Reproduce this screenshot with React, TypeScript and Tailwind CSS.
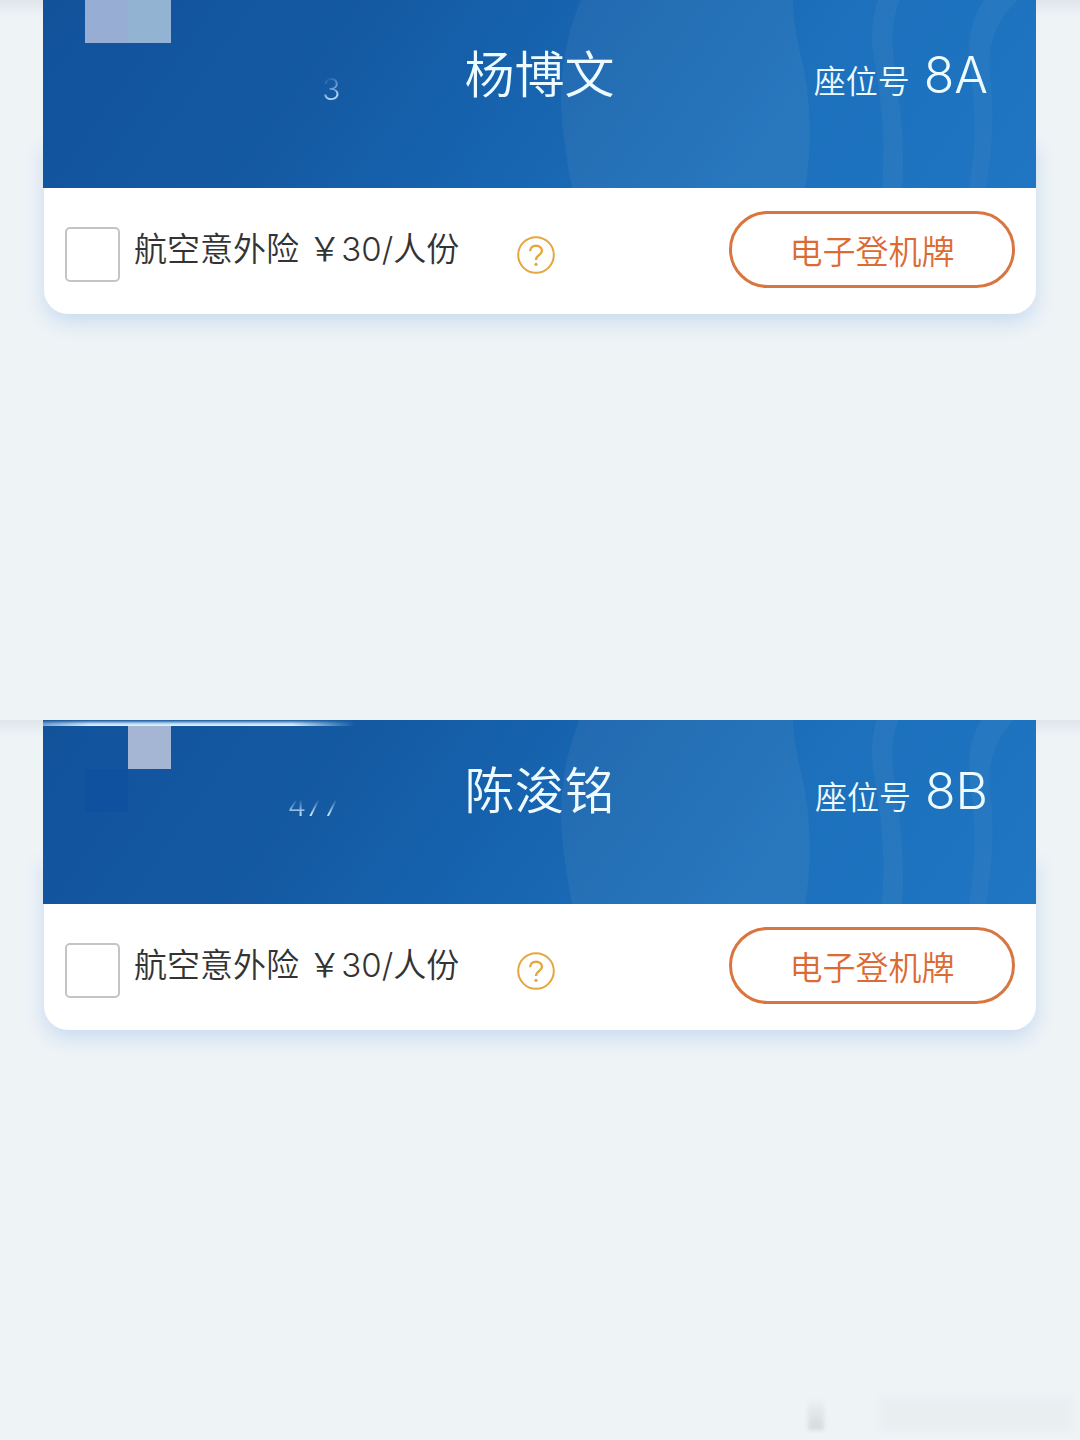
import { useId, useState } from "react";

interface Passenger {
  id: number;
  name: string;
  seat: string;
  idTail: string;
}

const PASSENGERS: Passenger[] = [
  { id: 0, name: "杨博文", seat: "8A", idTail: "3" },
  { id: 1, name: "陈浚铭", seat: "8B", idTail: "477" },
];

function HeaderPattern() {
  return (
    <svg
      className="absolute inset-0 h-full w-full"
      viewBox="0 0 993 188"
      preserveAspectRatio="none"
      aria-hidden="true"
    >
      <g fill="#8fb0c8">
        <path
          opacity="0.1"
          d="M538 0C519 45 515 90 520 130C523 155 526 175 529 188H762C769 150 768 105 761 70C754 40 750 20 750 0Z"
        />
        <path
          opacity="0.09"
          d="M835 0C828 20 827 42 832 65C840 105 842 150 839 188H859C862 150 858 110 853 75C847 40 849 20 857 0Z"
        />
        <path
          opacity="0.08"
          d="M941 0C926 22 924 45 928 75C934 115 932 155 926 188H943C949 150 952 115 947 75C944 42 955 18 975 0Z"
        />
      </g>
    </svg>
  );
}

function MaskedId({ passenger }: { passenger: Passenger }) {
  const long = passenger.idTail.length > 1;

  return (
    <>
      {long ? (
        <>
          <span className="absolute left-0 top-1 h-1.5 w-[312px] bg-[linear-gradient(180deg,transparent_0%,#b8d8ef_60%,#e7f5fd_100%)] [mask-image:linear-gradient(90deg,#0008_0%,#000_15%,#000_80%,transparent_100%)]" />
          <span className="absolute left-[42px] top-[53px] h-[43px] w-[43px] bg-[#0f519f]" />
          <span className="absolute left-[85px] top-[10px] h-[43px] w-[43px] bg-[#a4b6d4]" />
        </>
      ) : (
        <span className="absolute left-[42px] top-0 flex h-[43px] w-[86px]">
          <span className="flex-1 bg-[#98add4]" />
          <span className="flex-1 bg-[#92b3d2]" />
        </span>
      )}
      <span
        className={
          long
            ? "bg-[linear-gradient(180deg,transparent_35%,#c5def5_75%)] bg-clip-text text-[30px] font-light leading-9 text-transparent"
            : "bg-[linear-gradient(150deg,transparent_20%,#b5d2f5_70%)] bg-clip-text text-[30px] font-light leading-9 text-transparent"
        }
      >
        {passenger.idTail}
      </span>
    </>
  );
}

function HelpIcon() {
  return (
    <svg viewBox="0 0 38 38" className="h-full w-full" fill="none" stroke="#e5a63f" aria-hidden="true">
      <circle cx="19" cy="19" r="17.8" strokeWidth="2" />
      <path
        d="M13.2 15.2C13.2 11.8 15.6 9.8 19 9.8C22.4 9.8 25 11.8 25 14.8C25 19 19 18.8 19 24"
        strokeWidth="2.4"
      />
      <circle cx="19" cy="28.3" r="1.6" fill="#e5a63f" stroke="none" />
    </svg>
  );
}

function PassengerCard({ passenger }: { passenger: Passenger }) {
  const [insured, setInsured] = useState(false);
  const checkboxId = useId();

  return (
    <article className={passenger.id === 0 ? "" : "-mt-1"}>
      <header className="relative z-10 -ml-px h-[188px] overflow-hidden bg-[linear-gradient(125deg,#11529b_0%,#145aa3_30%,#1764b0_50%,#1c70bc_72%,#2076c3_100%)] text-[#edfaff]">
        <HeaderPattern />
        <div className="relative grid h-full grid-cols-[1fr_auto_1fr] items-end pb-[81px]">
          <div className="pr-[124px] text-right">
            <MaskedId passenger={passenger} />
          </div>
          <h2 className="text-[50px] font-[350] leading-[64px]">{passenger.name}</h2>
          <p className="flex items-baseline justify-end gap-3.5 pr-12 font-[350]">
            <span className="text-[32px]">座位号</span>
            <span className="text-[50px] leading-[64px]">{passenger.seat}</span>
          </p>
        </div>
      </header>

      <div className="-mt-12 rounded-b-[24px] bg-white pt-12 shadow-[0_8px_20px_#c8dbf0]">
        <div className="flex items-end justify-between pb-[26px] pl-[21px] pr-[21px] pt-[23px]">
          <div className="flex items-center gap-[58px] pb-1.5">
            <div className="flex items-start gap-3.5">
              <input
                id={checkboxId}
                type="checkbox"
                checked={insured}
                onChange={(e) => setInsured(e.target.checked)}
                className="h-[55px] w-[55px] shrink-0 appearance-none rounded-[5px] border-2 border-[#c4c4c4] bg-white checked:bg-[#e0743a]"
              />
              <label htmlFor={checkboxId} className="whitespace-pre text-[33px] font-[350] leading-[44px] text-[#333]">
                航空意外险 ￥30/人份
              </label>
            </div>
            <button type="button" aria-label="航空意外险说明" className="h-[38px] w-[38px]">
              <HelpIcon />
            </button>
          </div>
          <button
            type="button"
            className="h-[77px] w-[286px] rounded-full border-[3px] border-[#d9753f] pt-1.5 text-[33px] font-[350] text-[#dc6b33]"
          >
            电子登机牌
          </button>
        </div>
      </div>
    </article>
  );
}

export default function App() {
  return (
    <main className="relative grid min-h-screen grid-rows-2 bg-[#eef3f6] font-['Inter','Noto_Sans_CJK_SC',sans-serif]">
      {PASSENGERS.map((passenger) => (
        <section
          key={passenger.id}
          className="overflow-hidden bg-[linear-gradient(180deg,#dfe5ea_0px,#eef3f6_16px)] px-11"
        >
          <PassengerCard passenger={passenger} />
        </section>
      ))}
      {/* faint wiped-out stamp in the corner */}
      <div className="absolute bottom-2.5 right-2 flex h-9 items-end gap-14" aria-hidden="true">
        <span className="h-8 w-4 bg-[linear-gradient(180deg,transparent,#d5d9dc)] blur-[2px]" />
        <span className="h-8 w-48 bg-[#e9eef1] blur-[3px]" />
      </div>
    </main>
  );
}
